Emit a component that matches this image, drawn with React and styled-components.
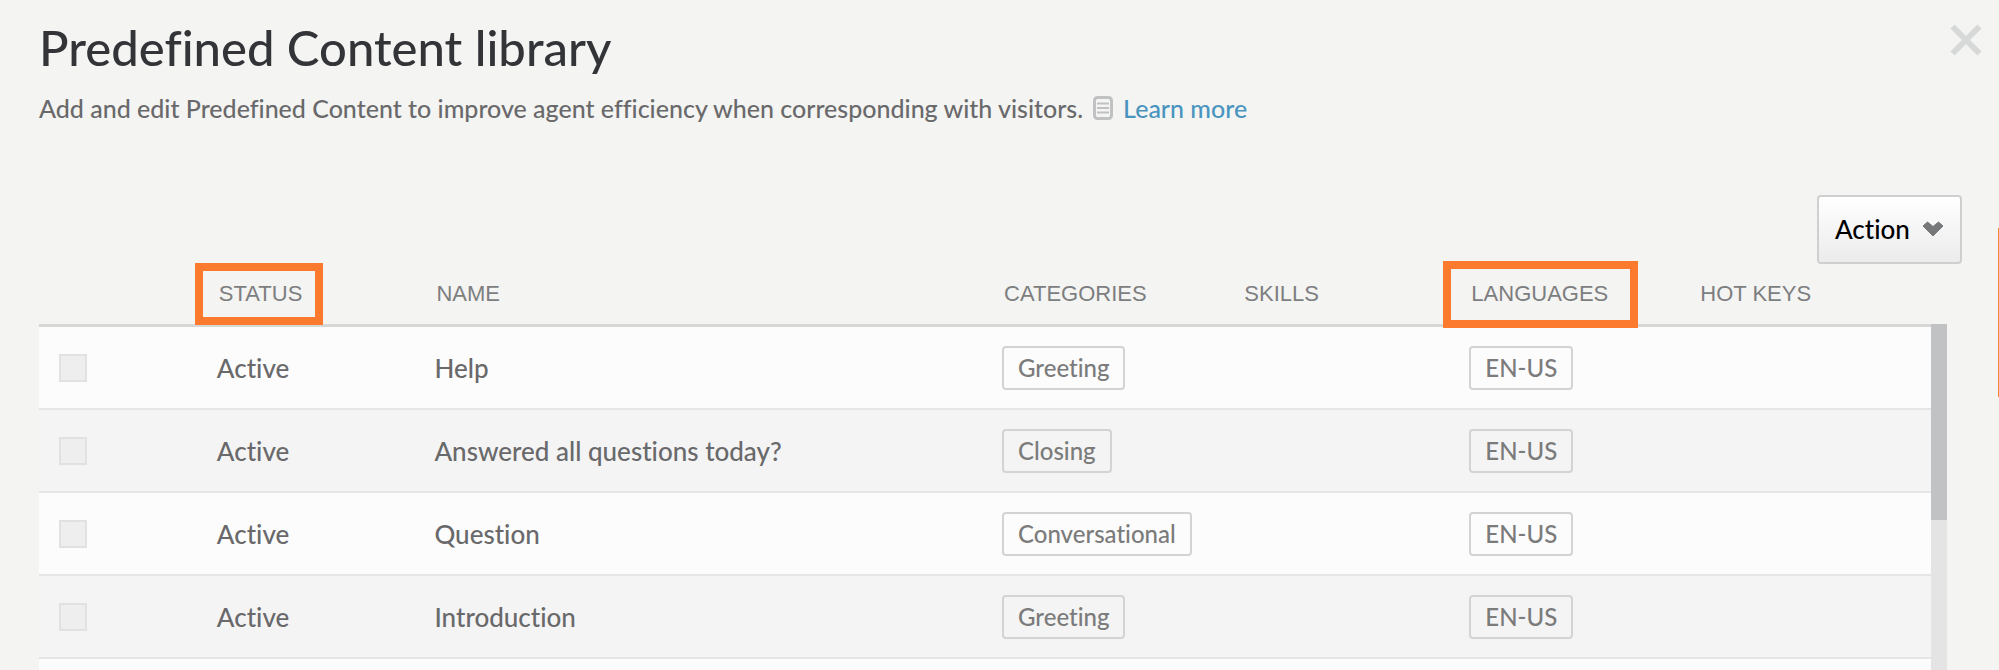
import React from 'react';
import styled, { createGlobalStyle } from 'styled-components';

const rows = [
	{ id: 1, status: 'Active', name: 'Help', category: 'Greeting', language: 'EN-US' },
	{ id: 2, status: 'Active', name: 'Answered all questions today?', category: 'Closing', language: 'EN-US' },
	{ id: 3, status: 'Active', name: 'Question', category: 'Conversational', language: 'EN-US' },
	{ id: 4, status: 'Active', name: 'Introduction', category: 'Greeting', language: 'EN-US' },
];

const columns = [
	{ label: 'Status', width: '11.5%', outline: '-18px -21px -18px -24px' },
	{ label: 'Name', width: '30%' },
	{ label: 'Categories', width: '12.7%' },
	{ label: 'Skills', width: '12%' },
	{ label: 'Languages', width: '12.1%', outline: '-20px -30px -21px -28px' },
	{ label: 'Hot keys', width: '12.3%' },
];

function DocumentIcon() {
	return (
		<svg width="20" height="24" viewBox="0 0 20 24" fill="none" stroke="#c0c1c2" aria-hidden="true">
			<rect x="1.5" y="1.5" width="17" height="21" rx="3" strokeWidth="3" />
			<path d="M4 7.500h12M4 12h12M4 16.500h12" strokeWidth="2" />
		</svg>
	);
}

function CloseIcon() {
	return (
		<svg width="32" height="32" viewBox="0 0 32 32" stroke="#d7d8d8" strokeWidth="6" aria-hidden="true">
			<path d="M2.500 2.500l27 27M29.500 2.500l-27 27" />
		</svg>
	);
}

function ChevronIcon() {
	return (
		<svg width="22" height="16" viewBox="0 0 22 16" fill="#77787a" stroke="#77787a" strokeLinejoin="round" aria-hidden="true">
			<path d="M5.500 1L11 5.500 16.500 1 21 5 11 15 1 5z" />
		</svg>
	);
}

export default function App() {
	return (
		<Page>
			<GlobalStyle />
			<Header>
				<div>
					<Title>Predefined Content library</Title>
					<Description>
						Add and edit Predefined Content to improve agent efficiency when corresponding with visitors.
						<DocumentIcon />
						<LearnMore href="#learn-more">Learn more</LearnMore>
					</Description>
				</div>
				<CloseButton type="button" aria-label="Close">
					<CloseIcon />
				</CloseButton>
			</Header>
			<Toolbar>
				<ActionButton type="button">
					Action
					<ChevronIcon />
				</ActionButton>
			</Toolbar>
			<TableArea>
				<Table>
					<thead>
						<tr>
							<HeadCell $width="9.4%" aria-label="Select" />
							{columns.map((column) => (
								<HeadCell key={column.label} $width={column.width} scope="col">
									{column.outline ? <Marked $outline={column.outline}>{column.label}</Marked> : column.label}
								</HeadCell>
							))}
						</tr>
					</thead>
					<tbody>
						{rows.map((row) => (
							<Row key={row.id}>
								<Cell $select>
									<Checkbox type="checkbox" aria-label={`Select ${row.name}`} />
								</Cell>
								<Cell>{row.status}</Cell>
								<Cell>{row.name}</Cell>
								<Cell><Tag>{row.category}</Tag></Cell>
								<Cell />
								<Cell><Tag>{row.language}</Tag></Cell>
								<Cell />
							</Row>
						))}
						<Row>
							<Cell colSpan={7} />
						</Row>
					</tbody>
				</Table>
				<ScrollTrack>
					<ScrollThumb />
				</ScrollTrack>
			</TableArea>
			<EdgeMark />
		</Page>
	);
}

const GlobalStyle = createGlobalStyle`
	* {
		box-sizing: border-box;
	}

	body {
		margin: 0;
		background: #f4f4f2;
		color: #69696b;
		font-family: Lato, sans-serif;
		font-variant-ligatures: none;
	}

	button, input {
		font-family: inherit;
		font-variant-ligatures: inherit;
	}
`;

const Page = styled.main`
	position: relative;
	height: 100vh;
	overflow: hidden;
	padding: 15px 0 0 39px;
`;

const Header = styled.header`
	display: flex;
	justify-content: space-between;
	align-items: flex-start;
	padding-right: 17px;
`;

const Title = styled.h1`
	margin: 0;
	color: #333438;
	font-size: 49px;
	line-height: 64px;
	font-weight: 500;
`;

const Description = styled.p`
	display: flex;
	align-items: center;
	gap: 10px;
	margin: 13px 0 0;
	font-size: 25px;
	line-height: 32px;
	font-weight: 500;
`;

const LearnMore = styled.a`
	color: #4a95c0;
	text-decoration: none;
`;

const CloseButton = styled.button`
	display: flex;
	margin-top: 9px;
	padding: 0;
	border: none;
	background: none;
	cursor: pointer;
`;

const Toolbar = styled.div`
	display: flex;
	justify-content: flex-end;
	margin-top: 71px;
	padding-right: 37px;
`;

const ActionButton = styled.button`
	display: flex;
	align-items: center;
	justify-content: space-between;
	width: 145px;
	height: 69px;
	padding: 0 16px 2px;
	border: 2px solid #cfcfcf;
	border-radius: 4px;
	background: linear-gradient(#fff, #ebebeb);
	color: #000;
	font-size: 26px;
	font-weight: 500;
	cursor: pointer;
`;

const TableArea = styled.section`
	display: flex;
	padding-right: 52px;
`;

const Table = styled.table`
	flex: 1;
	table-layout: fixed;
	border-collapse: separate;
	border-spacing: 0;
`;

const HeadCell = styled.th`
	width: ${(props) => props.$width};
	height: 63px;
	padding: 0 0 0 2px;
	border-bottom: 3px solid #d7d7d7;
	color: #7d7e80;
	font-family: 'Liberation Sans', sans-serif;
	font-size: 22px;
	font-weight: 400;
	text-align: left;
	text-transform: uppercase;
`;

const Marked = styled.span`
	position: relative;
	display: inline-block;

	&::after {
		content: '';
		position: absolute;
		inset: ${(props) => props.$outline};
		border: 8px solid #fc7a2e;
	}
`;

const Row = styled.tr`
	background: #fcfcfc;

	&:nth-child(even) {
		background: #f4f4f4;
	}
`;

const Cell = styled.td`
	height: 83px;
	padding: 0 0 0 ${(props) => (props.$select ? '20px' : '0')};
	border-bottom: 2px solid #e6e6e6;
	font-size: 26px;
	font-weight: 500;
	white-space: nowrap;
`;

const Checkbox = styled.input`
	display: block;
	appearance: none;
	width: 28px;
	height: 28px;
	margin: 0;
	border: 2px solid #e1e1e1;
	background: #eee;
`;

const Tag = styled.span`
	display: inline-block;
	padding: 6px 14px;
	border: 2px solid #d3d3d3;
	border-radius: 4px;
	color: #7b7b7b;
	font-size: 24px;
	line-height: 28px;
	vertical-align: middle;
`;

const ScrollTrack = styled.div`
	width: 16px;
	margin-top: 60px;
	background: #e4e4e4;
`;

const ScrollThumb = styled.div`
	height: 196px;
	background: #c1c2c4;
`;

const EdgeMark = styled.div`
	position: absolute;
	top: 228px;
	right: 0;
	width: 1px;
	height: 169px;
	background: #f08a3c;
`;
